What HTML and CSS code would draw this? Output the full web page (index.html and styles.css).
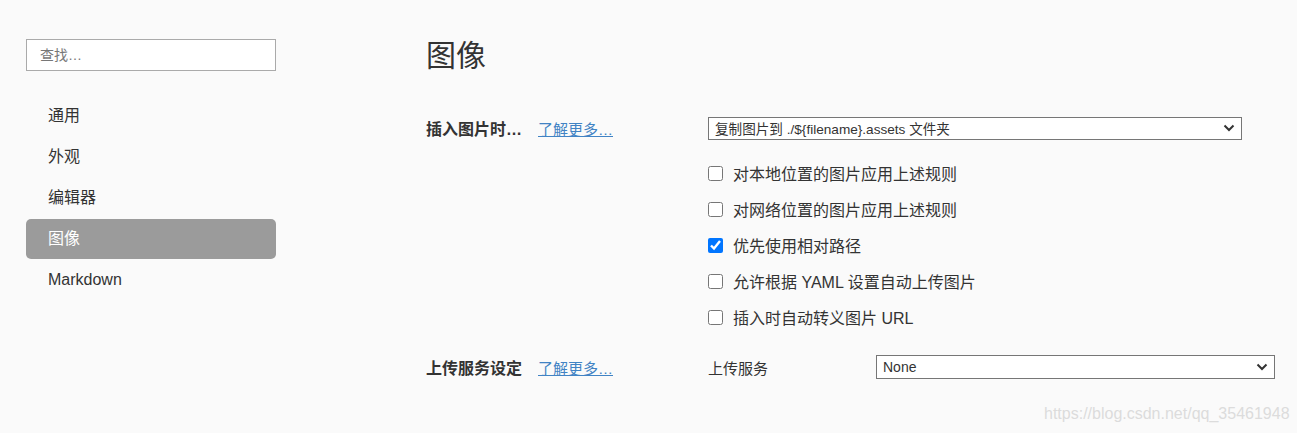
FILE: index.html
```html
<!DOCTYPE html>
<html lang="zh-CN">
<head>
<meta charset="utf-8">
<title>偏好设置 - 图像</title>
<link rel="stylesheet" href="styles.css">
</head>
<body>
<div class="app">
  <aside class="sidebar">
    <input class="search" type="text" placeholder="查找…">
    <nav class="nav">
      <div class="nav-item">通用</div>
      <div class="nav-item">外观</div>
      <div class="nav-item">编辑器</div>
      <div class="nav-item active">图像</div>
      <div class="nav-item">Markdown</div>
    </nav>
  </aside>
  <main class="main">
    <h1 class="title">图像</h1>

    <section class="row">
      <div class="label">插入图片时…</div>
      <a class="more" href="#">了解更多…</a>
      <div class="control">
        <div class="select sel-insert">
          <span class="select-text">复制图片到 ./${filename}.assets 文件夹</span>
          <svg class="chev" width="12" height="8" viewBox="0 0 12 8"><path d="M1.5 1.5 L6 6 L10.5 1.5" fill="none" stroke="#333" stroke-width="2"/></svg>
        </div>
      </div>
    </section>

    <div class="checks">
      <label class="check"><input type="checkbox"><span>对本地位置的图片应用上述规则</span></label>
      <label class="check"><input type="checkbox"><span>对网络位置的图片应用上述规则</span></label>
      <label class="check"><input type="checkbox" checked><span>优先使用相对路径</span></label>
      <label class="check"><input type="checkbox"><span>允许根据 YAML 设置自动上传图片</span></label>
      <label class="check"><input type="checkbox"><span>插入时自动转义图片 URL</span></label>
    </div>

    <section class="row row-upload">
      <div class="label">上传服务设定</div>
      <a class="more" href="#">了解更多…</a>
      <div class="control upload">
        <div class="sub-label">上传服务</div>
        <div class="select sel-upload">
          <span class="select-text">None</span>
          <svg class="chev" width="12" height="8" viewBox="0 0 12 8"><path d="M1.5 1.5 L6 6 L10.5 1.5" fill="none" stroke="#333" stroke-width="2"/></svg>
        </div>
      </div>
    </section>
  </main>
</div>
<div class="watermark">https://blog.csdn.net/qq_35461948</div>
</body>
</html>
```

FILE: styles.css
```css
* { box-sizing: border-box; }
html, body {
  margin: 0;
  padding: 0;
  background: #fafafa;
  color: #333;
  font-family: "Liberation Sans", Arial, "Noto Sans CJK SC", sans-serif;
  font-size: 16px;
}
.app {
  display: flex;
  width: 1297px;
  height: 433px;
}
.sidebar {
  width: 426px;
  padding: 39px 0 0 26px;
  flex: none;
}
.search {
  display: block;
  width: 250px;
  height: 32px;
  border: 1px solid #aaa;
  background: #fff;
  padding: 0 13px;
  font-family: inherit;
  font-size: 14px;
  color: #333;
  outline: none;
}
.search::placeholder { color: #777; }
.nav {
  margin-top: 25px;
  width: 250px;
  display: flex;
  flex-direction: column;
  gap: 1px;
}
.nav-item {
  height: 40px;
  line-height: 40px;
  padding-left: 22px;
  font-size: 16px;
  color: #333;
  border-radius: 5px;
}
.nav-item.active {
  background: #9b9b9b;
  color: #fff;
}
.main {
  flex: 1;
  padding-top: 36px;
}
.title {
  margin: 0;
  font-size: 30px;
  line-height: 40px;
  font-weight: normal;
  color: #333;
}
.row {
  display: flex;
  align-items: center;
  margin-top: 40px;
}
.label {
  width: 112px;
  font-weight: bold;
  font-size: 16px;
  color: #333;
  flex: none;
}
.more {
  width: 170px;
  flex: none;
  font-size: 15px;
  color: #4183c4;
  text-decoration: underline;
}
.control { flex: none; }
.select {
  position: relative;
  display: flex;
  align-items: center;
  background: #fff;
  border: 1px solid #767676;
  padding: 0 6px;
  font-size: 14px;
  color: #333;
}
.sel-insert { width: 534px; height: 23px; font-size: 13.6px; }
.chev {
  position: absolute;
  right: 6px;
  top: 50%;
  margin-top: -4px;
}
.checks {
  margin-top: 15px;
  margin-left: 282px;
  display: flex;
  flex-direction: column;
}
.check {
  height: 36px;
  display: flex;
  align-items: center;
  font-size: 16px;
  color: #333;
}
.check input {
  width: 15px;
  height: 15px;
  margin: 0 10px 0 0;
  accent-color: #0075ff;
}
.row-upload { margin-top: 20px; }
.upload {
  display: flex;
  align-items: center;
}
.sub-label {
  width: 168px;
  font-size: 15px;
  color: #333;
}
.sel-upload { width: 399px; height: 24px; }
.watermark {
  position: absolute;
  left: 1044px;
  top: 404px;
  font-size: 16px;
  line-height: 20px;
  color: #dcdcdc;
  white-space: nowrap;
}
```
